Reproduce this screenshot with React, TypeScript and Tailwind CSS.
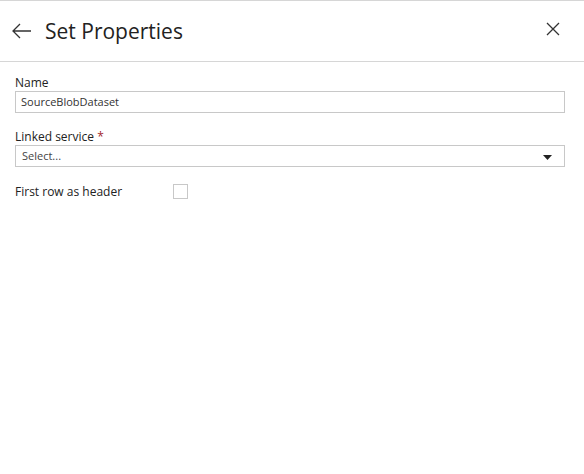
import React from 'react';

const font = { fontFamily: '"Segoe UI", "Open Sans", "Noto Sans", sans-serif' };

export default function App() {
    return (
        <div className="w-[584px] h-[474px] bg-white border-t border-[#d6d6d6] text-[#1e1e1e]" style={font}>
            {/* Header */}
            <div className="h-[61px] flex items-center border-b border-[#d6d6d6] pl-[12px] pr-[24px]">
                <svg width="20" height="16" viewBox="0 0 20 16">
                    <path d="M1 8 H19 M8 1 L1 8 L8 15" fill="none" stroke="#333" strokeWidth="1.3" />
                </svg>
                <h1 className="ml-[13px] text-[21px] leading-none text-[#222]">Set Properties</h1>
                <svg width="14" height="14" viewBox="0 0 14 14" className="ml-auto mt-[-4px]">
                    <path d="M1 1 L13 13 M13 1 L1 13" fill="none" stroke="#333" strokeWidth="1.3" />
                </svg>
            </div>

            {/* Form */}
            <div className="pl-[15px] pr-[19px] pt-[13px] text-[12px]">
                <label className="block leading-[16px] text-[#222]">Name</label>
                <div className="h-[22px] border border-[#c8c8c8] flex items-center px-[5px] text-[11px] text-[#333]">
                    SourceBlobDataset
                </div>

                <label className="block mt-[16px] leading-[16px] text-[#222]">
                    Linked service <span className="text-[#a4262c]">*</span>
                </label>
                <div className="h-[22px] border border-[#c8c8c8] flex items-center pl-[6px] pr-[12px] text-[11px] text-[#444]">
                    <span>Select...</span>
                    <svg width="9" height="5" viewBox="0 0 9 5" className="ml-auto mt-[3px]">
                        <path d="M0 0 H9 L4.5 5 Z" fill="#222" />
                    </svg>
                </div>

                <div className="flex items-center mt-[17px]">
                    <span className="w-[158px] leading-[16px] text-[#222]">First row as header</span>
                    <div className="w-[15px] h-[15px] border border-[#c8c8c8] mt-[-1px]" />
                </div>
            </div>
        </div>
    );
}
